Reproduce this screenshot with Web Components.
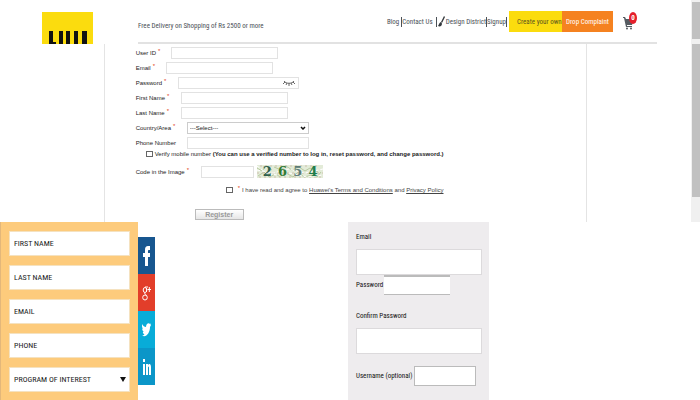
<!DOCTYPE html>
<html lang="en">
<head>
<meta charset="utf-8">
<title>Sign up</title>
<style>
  html, body { margin: 0; min-height: 100%; background: #fff; }
  body { font-family: "Liberation Sans", Arial, sans-serif; color: #333; }
</style>
</head>
<body>
<app-page></app-page>
<script>
const define = (name, html) => {
  const template = document.createElement('template');
  template.innerHTML = html;
  customElements.define(name, class extends HTMLElement {
    constructor() {
      super();
      this.attachShadow({ mode: 'open' }).append(template.content.cloneNode(true));
    }
  });
};

/* A label and its text box; "above" puts the label over a full-width box. */
customElements.define('form-field', class extends HTMLElement {
  connectedCallback() {
    const root = this.attachShadow({ mode: 'open' });
    root.innerHTML = `
      <style>
        :host { display: flex; align-items: center; }
        label { flex: none; width: var(--label, auto); white-space: nowrap; }
        :host([above]) { flex-direction: column; align-items: stretch; }
        i { color: #e2401c; font-style: normal; position: relative; top: -2px; padding-left: 2px; }
        .box { display: flex; align-items: center; box-sizing: border-box; width: var(--box, 100%);
               height: var(--height, 12px); border: 1px solid var(--line, #e2e2e2);
               border-width: var(--edges, 1px); background: #fff; }
        input { flex: 1; min-width: 0; height: 100%; box-sizing: border-box; border: 0; padding: 0 4px;
                background: none; font: inherit; color: inherit; outline: 0; }
      </style>
      <label for="f"></label>
      <div class="box"><input id="f"><slot></slot></div>`;
    const label = root.querySelector('label');
    label.textContent = this.getAttribute('label');
    if (this.hasAttribute('required')) label.insertAdjacentHTML('beforeend', '<i>*</i>');
    root.querySelector('input').type = this.getAttribute('type') || 'text';
  }
});

customElements.define('lead-field', class extends HTMLElement {
  connectedCallback() {
    this.attachShadow({ mode: 'open' }).innerHTML = `
      <style>
        :host { display: block; }
        input { display: block; box-sizing: border-box; width: 100%; height: 25px; border: 1px solid #f5e2c0;
                padding: 0 4px; background: #fff; font: inherit; color: #222; border-radius: 0; }
        input::placeholder { color: #222; opacity: 1; }
      </style>
      <input type="text">`;
    const input = this.shadowRoot.querySelector('input');
    input.placeholder = this.getAttribute('label');
    input.setAttribute('aria-label', this.getAttribute('label'));
  }
});

define('brand-logo', `
  <style>:host { display: block; line-height: 0; }</style>
  <svg width="51" height="32" viewBox="0 0 51 32" role="img" aria-label="Logo">
    <rect width="51" height="32" fill="#fbdc0e"/>
    <path fill="#111" d="M7 19h4v11h3v2H7zM17 19h4v13h-4zM24 19h4v13h-4zM32 19h4v13h-4zM40 19h5v13h-5z"/>
  </svg>`);

define('cart-link', `
  <style>
    :host { display: block; }
    a { display: block; position: relative; width: 14px; height: 20px; color: #fff; text-decoration: none; }
    svg { position: absolute; left: 0; bottom: 2px; }
    b { position: absolute; right: 0; top: 0; width: 8px; height: 12px; border-radius: 50%; background: #e4202c;
        font: bold 7px/12px "Roboto Condensed", Roboto, sans-serif; text-align: center; }
  </style>
  <a href="#" aria-label="Cart">
    <svg width="11" height="13" viewBox="0 0 11 13">
      <path fill="#555b61" d="M0 0h2l1 2h8L9 8H4v1h5v1H3L1 1H0z"/>
      <circle cx="4" cy="11.500" r="1" fill="#555b61"/><circle cx="8" cy="11.500" r="1" fill="#555b61"/>
    </svg><b>0</b></a>`);

define('site-header', `
  <style>
    :host { display: flex; padding: 0 34px 0 42px; font: 7px/12px "Roboto Condensed", Roboto, sans-serif; color: #4b5157; }
    brand-logo { padding-top: 12px; width: 96px; flex: none; }
    .bar { flex: 1; display: flex; align-items: flex-start; justify-content: space-between; border-bottom: 2px solid #e2e2e2;
           box-sizing: border-box; padding: 11px 20px 0 0; height: 44px; }
    p { margin: 0; padding-top: 9px; white-space: nowrap; }
    nav { display: flex; align-items: center; white-space: nowrap; height: 21px; }
    a { color: inherit; text-decoration: none; }
    .sep { border-left: 1px solid #4b5157; height: 10px; }
    button { height: 21px; border: 0; padding: 0 4px; font: inherit; }
    .own { margin-left: 2px; padding: 0 1px 0 8px; width: 53px; background: #fbdc0e; color: #5a5520; }
    .drop { width: 51px; background: #f58220; color: #fff; }
    cart-link { margin-left: 10px; }
    .first { padding-right: 2px; }
    .contact { padding-right: 3px; }
    svg { margin: 0 1px; }
  </style>
  <brand-logo></brand-logo>
  <div class="bar">
    <p>Free Delivery on Shopping of Rs 2500 or more</p>
    <nav>
      <a class="first" href="#">Blog</a><span class="sep"></span>
      <a class="contact" href="#">Contact Us</a><span class="sep"></span>
      <svg width="7" height="11" viewBox="0 0 7 11"><path fill="#33383d" d="M6 0l1 1-3 6-1-1zM2.500 6l1.500 1.500C4 10 2 11 0 10c1-1 1-3 2.500-4z"/></svg>
      <a href="#">Design District</a><span class="sep"></span>
      <a href="#">Signup</a><span class="sep"></span>
      <button class="own" type="button">Create your own</button><button class="drop" type="button">Drop Complaint</button>
      <cart-link></cart-link>
    </nav>
  </div>`);

define('captcha-code', `
  <style>
    :host { display: block; width: 66px; height: 13px; position: relative; background: #e3ebd8;
            font: bold 13px/13px "DejaVu Serif", "Liberation Serif", serif; }
    svg { position: absolute; inset: 0; }
    div { position: relative; display: flex; justify-content: space-between; padding: 0 5px 0 6px; }
    .a { color: #2f5f4b; } .b { color: #317a35; } .c { color: #5d7b78; } .d { color: #1f7d4c; }
  </style>
  <svg width="66" height="13" viewBox="0 0 66 13" fill="none" stroke-width="1">
    <path stroke="#b7caa0" d="M0 3l5 3 4-5 6 4M1 11l6-4 5 5 7-3 4 3M17 2l7 3 5-4 6 4 7-3 6 4 5-3 8 4M24 11l5-3 7 4 5-5 6 5 8-2 5 2 4-5"/>
    <path stroke="#cdbfae" stroke-dasharray="2 3" d="M0 8h66M3 1h60M2 12h62"/>
    <path stroke="#fff" stroke-dasharray="3 2" d="M0 5l16 3 16-4 16 4 18-4M0 1l12 9 20-2 18 4 16-2"/>
  </svg>
  <div><span class="a">2</span><span class="b">6</span><span class="c">5</span><span class="d">4</span></div>`);

define('register-form', `
  <style>
    :host { display: block; margin: 0 15% 0 15%; border: solid #e4e4e4; border-width: 0 1px; padding: 3px 0 2px 31px;
            font-size: 6px; line-height: 8px; color: #222; }
    form { display: flex; flex-direction: column; gap: 3px; }
    form-field { --box: 107px; }
    .user { --label: 35px; } .email { --label: 30px; } .pass { --label: 42px; --box: 121px; }
    .name { --label: 45px; } .phone { --label: 51px; --box: 122px; }
    .row { display: flex; align-items: center; }
    .row > label { white-space: nowrap; }
    .country label { width: 51px; }
    i { color: #e2401c; font-style: normal; position: relative; top: -2px; padding: 0 2px; }
    .pick { display: grid; align-items: center; width: 122px; }
    .pick > * { grid-area: 1 / 1; }
    .pick svg { justify-self: end; margin-right: 3px; }
    select { appearance: none; box-sizing: border-box; width: 100%; height: 12px; border: 1px solid #ccc; border-radius: 0;
             background: #fff; padding: 0 2px; font: inherit; color: inherit; }
    input[type=checkbox] { appearance: none; flex: none; width: 7px; height: 6px; margin: 0 2px 0 0; border: 1px solid #666; background: #fff; }
    .verify { padding-left: 10px; margin-top: -2px; }
    .code { padding-top: 4px; gap: 3px; }
    .code form-field { --label: 65px; --box: 53px; }
    .agree { padding: 5px 0 0 90px; color: #444; }
    .agree input[type=checkbox] { margin-right: 3px; }
    a { color: inherit; }
    button { display: block; margin: 12px 0 0 59px; width: 49px; height: 11px; border: 1px solid #bbb; padding: 0; color: #999;
             background: linear-gradient(#fff, #e6e6e6); font: bold 7px/8px "Liberation Sans", Arial, sans-serif; }
    .lash { padding-right: 3px; }
  </style>
  <form>
    <form-field class="user" label="User ID" required></form-field>
    <form-field class="email" label="Email" required></form-field>
    <form-field class="pass" label="Password" type="password" required>
      <svg class="lash" width="12" height="6" viewBox="0 0 12 6" fill="none" stroke="#666"><path d="M1 1c2 3 8 3 10 0M2 2L0 4M4 3L3 5M6 3v3M8 3l1 2M10 2l2 2"/></svg>
    </form-field>
    <form-field class="name" label="First Name" required></form-field>
    <form-field class="name" label="Last Name" required></form-field>
    <div class="row country">
      <label for="country">Country/Area<i>*</i></label>
      <div class="pick">
        <select id="country"><option>---Select---</option></select>
        <svg width="6" height="4" viewBox="0 0 6 4" fill="none" stroke="#111" stroke-width="1.500"><path d="M1 1l2 2 2-2"/></svg>
      </div>
    </div>
    <form-field class="phone" label="Phone Number"></form-field>
    <div class="row verify"><input type="checkbox" id="verify"><label for="verify">Verify mobile number <b>(You can use a verified number to log in, reset password, and change password.)</b></label></div>
    <div class="row code">
      <form-field label="Code in the Image" required></form-field>
      <captcha-code></captcha-code>
    </div>
    <div class="row agree"><input type="checkbox" id="agree"><label for="agree"><i>*</i>I have read and agree to <a href="#">Huawei's Terms and Conditions</a> and <a href="#">Privacy Policy</a></label></div>
    <div><button type="button">Register</button></div>
  </form>`);

define('lead-form', `
  <style>
    :host { display: block; box-sizing: border-box; background: #fdcb7c; padding: 9px 8px;
            border-left: 1px solid #e3b77a; font: 8px/12px "Roboto Condensed", Roboto, sans-serif; color: #222; }
    form { display: flex; flex-direction: column; gap: 9px; }
    .pick { display: grid; align-items: center; }
    .pick > * { grid-area: 1 / 1; }
    .pick svg { justify-self: end; margin-right: 4px; }
    select { appearance: none; box-sizing: border-box; width: 100%; height: 25px; border: 1px solid #f5e2c0; border-radius: 0;
             background: #fff; padding: 0 4px; font: inherit; color: inherit; }
  </style>
  <form>
    <lead-field label="FIRST NAME"></lead-field>
    <lead-field label="LAST NAME"></lead-field>
    <lead-field label="EMAIL"></lead-field>
    <lead-field label="PHONE"></lead-field>
    <div class="pick">
      <select aria-label="Program of interest"><option>PROGRAM OF INTEREST</option></select>
      <svg width="6" height="5" viewBox="0 0 6 5"><path d="M0 0h6L3 5z" fill="#111"/></svg>
    </div>
  </form>`);

define('social-links', `
  <style>
    :host { display: flex; flex-direction: column; margin-top: 15px; align-self: flex-start; width: 17px; }
    a { display: grid; place-items: center; height: 37px; }
    .f { background: #17568f; } .g { background: #e23e2a; } .t { background: #08acd8; } .l { background: #0b96c8; }
  </style>
  <a class="f" href="#" aria-label="Facebook"><svg width="7" height="20" viewBox="0 0 7 20"><path fill="#fff" d="M2 20v-9H0V7h2V4c0-3 1-4 3-4h2v4H6C5 4 5 4 5 7h2v4H5v9z"/></svg></a>
  <a class="g" href="#" aria-label="Google Plus"><svg width="9" height="16" viewBox="0 0 9 16" fill="none" stroke="#fff"><ellipse cx="3" cy="5" rx="1.800" ry="2.500"/><ellipse cx="3" cy="12.500" rx="2.300" ry="2.500"/><path d="M3 2h3M4.500 3v4M3 7.500c-1.500 1 1 1.500 1.500 3M5.500 4.500h3.500M7.300 2v5"/></svg></a>
  <a class="t" href="#" aria-label="Twitter"><svg width="9" height="14" viewBox="0 0 9 14"><path fill="#fff" d="M0 1c1 2 2.500 3 4 3C4 1 6.500-1 8 1l1-.5L8.500 2 9 2 8 4c0 6-4 11-8 8.500 1 0 2-.5 2.500-1.300C1.500 11 1 10 .8 9l1-.1C.8 8 .2 7 .2 5.500l.8.300C0 4.500-.3 3 0 1z"/></svg></a>
  <a class="l" href="#" aria-label="LinkedIn"><svg width="8" height="16" viewBox="0 0 8 16"><path fill="#fff" d="M0 5h2v11H0zM0 0h2v3H0zM3 5h2v1.500C6 4 8 5 8 8v8H6V9c0-2-1-2-1 0v7H3z"/></svg></a>`);

define('account-form', `
  <style>
    :host { display: block; box-sizing: border-box; background: #eeecee; padding: 9px 7px 9px 8px;
            font: 7px/12px "Roboto Condensed", Roboto, sans-serif; color: #111; }
    form { display: flex; flex-direction: column; }
    .wide { --height: 26px; --line: #dcdadc; gap: 6px; }
    .pass { --label: 28px; --box: 66px; --height: 20px; --line: #bbb; --edges: 2px 0 1px 0; margin-bottom: 15px; }
    .wide.second { margin-bottom: 12px; }
    .user { --label: 58px; --box: 62px; --height: 20px; --line: #bbb; }
  </style>
  <form>
    <form-field class="wide" above label="Email" type="email"></form-field>
    <form-field class="pass" label="Password" type="password"></form-field>
    <form-field class="wide second" above label="Confirm Password" type="password"></form-field>
    <form-field class="user" label="Username (optional)"></form-field>
  </form>`);

define('scroll-rail', `
  <style>
    :host { display: flex; flex-direction: column; gap: 5px; box-sizing: border-box; padding: 2px 0 25px 1px; background: #f0f0f0; }
    span { background: #c1c1c1; flex: 37; } .long { flex: 153; }
  </style>
  <span></span><span class="long"></span>`);

define('app-page', `
  <style>
    :host { display: flex; flex-direction: column; min-height: 100vh; }
    .top { display: grid; grid-template-columns: 1fr 9px; }
    .bottom { display: flex; flex: 1; align-items: stretch; }
    lead-form { width: 138px; flex: none; }
    account-form { width: 141px; margin-left: auto; margin-right: 211px; flex: none; }
  </style>
  <section class="top">
    <div><site-header></site-header><register-form></register-form></div>
    <scroll-rail></scroll-rail>
  </section>
  <section class="bottom"><lead-form></lead-form><social-links></social-links><account-form></account-form></section>`);
</script>
</body>
</html>
